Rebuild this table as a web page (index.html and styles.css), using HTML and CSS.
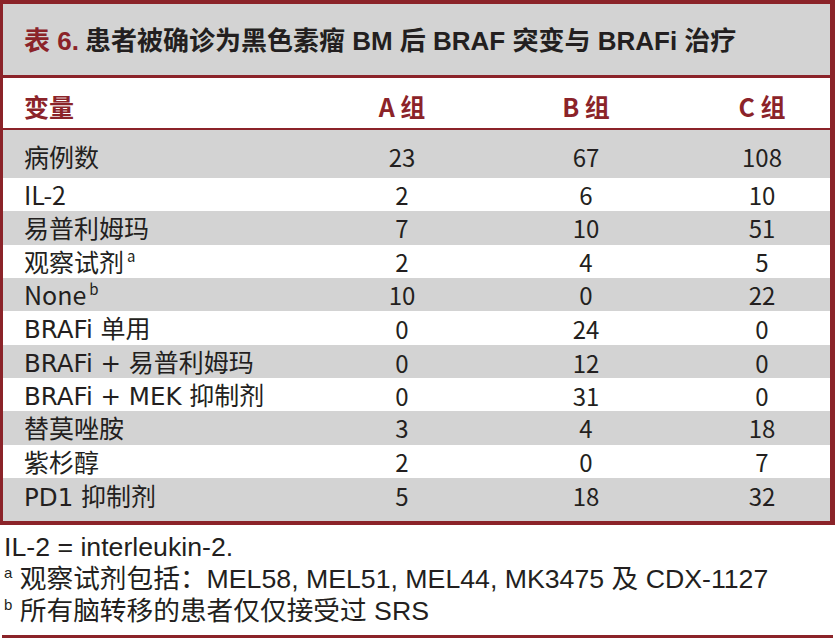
FILE: index.html
```html
<!DOCTYPE html>
<html lang="zh">
<head>
<meta charset="utf-8">
<link rel="stylesheet" href="styles.css">
</head>
<body>
<div class="table">
  <div class="title"><span class="tnum">表 6.</span> 患者被确诊为黑色素瘤 BM 后 BRAF 突变与 BRAFi 治疗</div>
  <div class="row head">
    <div class="label">变量</div><div class="c">A 组</div><div class="c">B 组</div><div class="c cc">C 组</div>
  </div>
  <div class="row gray first">
    <div class="label">病例数</div><div class="c">23</div><div class="c">67</div><div class="c cc">108</div>
  </div>
  <div class="row">
    <div class="label">IL-2</div><div class="c">2</div><div class="c">6</div><div class="c cc">10</div>
  </div>
  <div class="row gray">
    <div class="label">易普利姆玛</div><div class="c">7</div><div class="c">10</div><div class="c cc">51</div>
  </div>
  <div class="row">
    <div class="label">观察试剂<sup class="sup">a</sup></div><div class="c">2</div><div class="c">4</div><div class="c cc">5</div>
  </div>
  <div class="row gray">
    <div class="label">None<sup class="sup">b</sup></div><div class="c">10</div><div class="c">0</div><div class="c cc">22</div>
  </div>
  <div class="row">
    <div class="label"><span class="dv">BRAFi </span>单用</div><div class="c">0</div><div class="c">24</div><div class="c cc">0</div>
  </div>
  <div class="row gray">
    <div class="label"><span class="dv">BRAFi + </span>易普利姆玛</div><div class="c">0</div><div class="c">12</div><div class="c cc">0</div>
  </div>
  <div class="row">
    <div class="label"><span class="dv">BRAFi + MEK </span>抑制剂</div><div class="c">0</div><div class="c">31</div><div class="c cc">0</div>
  </div>
  <div class="row gray">
    <div class="label">替莫唑胺</div><div class="c">3</div><div class="c">4</div><div class="c cc">18</div>
  </div>
  <div class="row">
    <div class="label">紫杉醇</div><div class="c">2</div><div class="c">0</div><div class="c cc">7</div>
  </div>
  <div class="row gray last">
    <div class="label"><span class="dv">PD1 </span>抑制剂</div><div class="c">5</div><div class="c">18</div><div class="c cc">32</div>
  </div>
</div>
<div class="notes">
  <p>IL-2 = interleukin-2.</p>
  <p><sup class="fsup">a</sup> 观察试剂包括：MEL58, MEL51, MEL44, MK3475 及 CDX-1127</p>
  <p><sup class="fsup">b</sup> 所有脑转移的患者仅仅接受过 SRS</p>
</div>
<div class="rule"></div>
</body>
</html>
```

FILE: styles.css
```css
html, body {
  margin: 0;
  padding: 0;
  background: #ffffff;
}
body {
  width: 835px;
  height: 641px;
  overflow: hidden;
  color: #231f20;
  font-family: "Noto Sans CJK SC", sans-serif;
}
.table {
  border-style: solid;
  border-color: #8b2329;
  border-width: 4px 5px 4px 3px;
}
.title {
  height: 74px;
  background: #d3d3d3;
  border-bottom: 3px solid #8b2329;
  box-sizing: border-box;
  padding-left: 21px;
  padding-bottom: 2px;
  display: flex;
  align-items: center;
  font-family: "Liberation Sans", "Noto Sans CJK SC", sans-serif;
  font-weight: bold;
  font-size: 26px;
  color: #231f20;
}
.tnum {
  color: #8b2329;
  margin-right: 6px;
}
.row {
  display: grid;
  grid-template-columns: 316px 166px 202px 1fr;
  align-items: center;
  height: 33.33px;
  font-size: 25px;
  line-height: 33px;
}
.row.gray {
  background: #d3d3d3;
}
.row.head {
  border-bottom: 2px solid #8b2329;
  color: #8b2329;
  font-weight: bold;
  font-size: 25px;
  padding-top: 6px;
  height: 44px;
}
.row.first {
  box-sizing: border-box;
  height: 48px;
  padding-top: 5px;
}
.row.last {
  height: 43px;
  align-items: start;
}
.row.last > div {
  padding-top: 1px;
}
.label {
  padding-left: 21px;
  white-space: nowrap;
}
.dv {
  font-family: "DejaVu Sans", sans-serif;
  font-size: 24.5px;
}
.c {
  text-align: center;
  font-size: 24px;
}
.cc {
  padding-left: 7px;
}
.head .c {
  font-size: 25px;
}
.sup {
  font-size: 15px;
  vertical-align: 10px;
  line-height: 0;
  margin-left: 3px;
}
.notes {
  padding-left: 4px;
  padding-top: 6px;
  font-family: "Liberation Sans", "Noto Sans CJK SC", sans-serif;
  font-size: 26.7px;
  color: #231f20;
}
.notes p {
  margin: 0;
  height: 32px;
  line-height: 32px;
  white-space: nowrap;
}
.fsup {
  font-size: 15px;
  vertical-align: 10px;
  line-height: 0;
}
.rule {
  margin: 8px 2px 0 2px;
  height: 3px;
  background: #8b2329;
}
```
